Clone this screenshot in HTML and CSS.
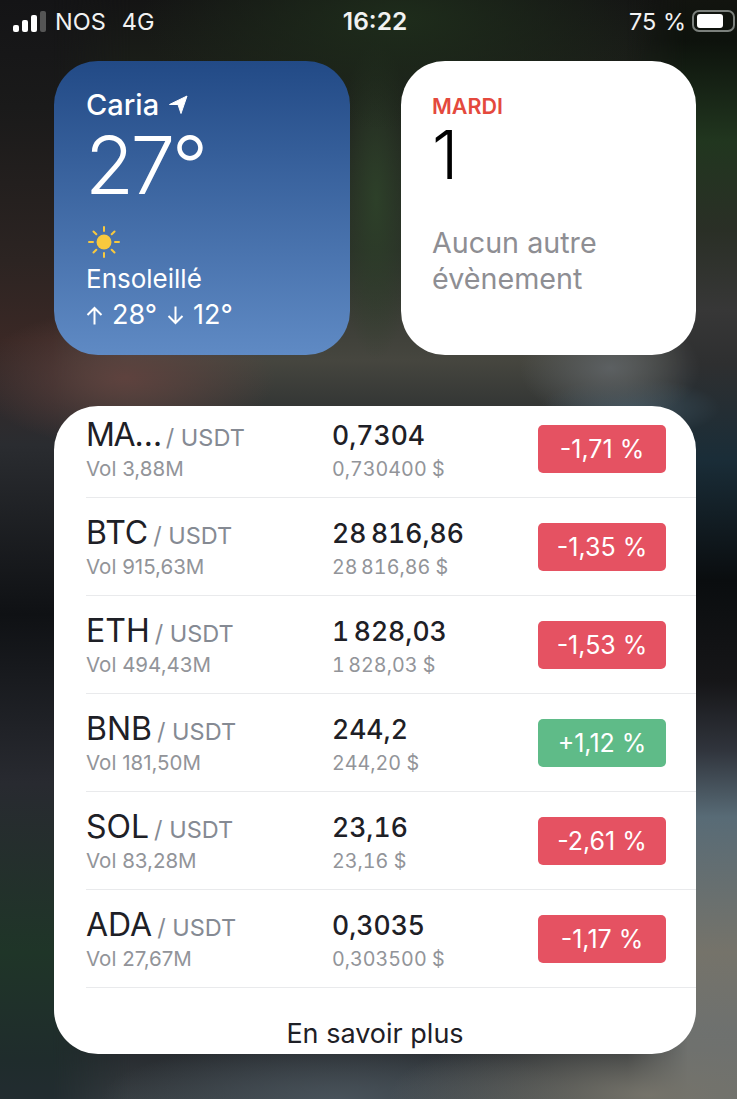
FILE: index.html
```html
<!DOCTYPE html>
<html lang="fr">
<head>
<meta charset="utf-8">
<title>Widgets</title>
<link rel="stylesheet" href="styles.css">
</head>
<body>
<div class="statusbar">
  <div class="status-left">
    <div class="signal"><i class="b1"></i><i class="b2"></i><i class="b3"></i><i class="b4"></i></div>
    <span class="carrier">NOS</span>
    <span class="net">4G</span>
  </div>
  <div class="clock">16:22</div>
  <div class="status-right">
    <span>75 %</span>
    <div class="battery"><div class="level"></div></div>
  </div>
</div>

<div class="widgets">
  <div class="widget weather">
    <div class="city">Caria
      <svg width="20" height="20" viewBox="0 0 20 20"><path d="M19 1 1.500 9.500h8.500l3 9z" fill="#fff" stroke="#fff" stroke-width="1" stroke-linejoin="round"/></svg>
    </div>
    <div class="temp">27°</div>
    <svg class="sun" width="34" height="34" viewBox="0 0 34 34">
      <circle cx="17" cy="17" r="7.500" fill="#f8c93e"/>
      <g stroke="#f8c93e" stroke-width="2" stroke-linecap="round">
        <path d="M17 2v4M17 28v4M2 17h4M28 17h4M6.500 6.500l2.800 2.800M24.700 24.700l2.800 2.800M6.500 27.500l2.800-2.800M24.700 9.300l2.800-2.800"/>
      </g>
    </svg>
    <div class="sky">Ensoleillé</div>
    <div class="range">
      <svg width="17" height="19" viewBox="0 0 17 19"><path d="M8.500 18.500V2M1.500 9l7-7 7 7" fill="none" stroke="#fff" stroke-width="2"/></svg>
      <span>28°</span>
      <svg class="low" width="17" height="19" viewBox="0 0 17 19"><path d="M8.500 .5V17M1.500 10l7 7 7-7" fill="none" stroke="#fff" stroke-width="2"/></svg>
      <span>12°</span>
    </div>
  </div>

  <div class="widget calendar">
    <div class="day">MARDI</div>
    <div class="date">1</div>
    <div class="noevent">Aucun autre<br>évènement</div>
  </div>
</div>

<div class="panel">
  <div class="list">
    <div class="row">
      <div class="pair"><div><span class="sym clip">MA…</span><span class="quote">/ USDT</span></div><div class="sub">Vol 3,88M</div></div>
      <div class="price"><div class="last">0,7304</div><div class="sub">0,730400 $</div></div>
      <div class="badge down">-1,71 %</div>
    </div>
    <div class="row">
      <div class="pair"><div><span class="sym">BTC</span><span class="quote">/ USDT</span></div><div class="sub">Vol 915,63M</div></div>
      <div class="price"><div class="last">28&#8239;816,86</div><div class="sub">28&#8239;816,86 $</div></div>
      <div class="badge down">-1,35 %</div>
    </div>
    <div class="row">
      <div class="pair"><div><span class="sym">ETH</span><span class="quote">/ USDT</span></div><div class="sub">Vol 494,43M</div></div>
      <div class="price"><div class="last">1&#8239;828,03</div><div class="sub">1&#8239;828,03 $</div></div>
      <div class="badge down">-1,53 %</div>
    </div>
    <div class="row">
      <div class="pair"><div><span class="sym">BNB</span><span class="quote">/ USDT</span></div><div class="sub">Vol 181,50M</div></div>
      <div class="price"><div class="last">244,2</div><div class="sub">244,20 $</div></div>
      <div class="badge up">+1,12 %</div>
    </div>
    <div class="row">
      <div class="pair"><div><span class="sym">SOL</span><span class="quote">/ USDT</span></div><div class="sub">Vol 83,28M</div></div>
      <div class="price"><div class="last">23,16</div><div class="sub">23,16 $</div></div>
      <div class="badge down">-2,61 %</div>
    </div>
    <div class="row">
      <div class="pair"><div><span class="sym">ADA</span><span class="quote">/ USDT</span></div><div class="sub">Vol 27,67M</div></div>
      <div class="price"><div class="last">0,3035</div><div class="sub">0,303500 $</div></div>
      <div class="badge down">-1,17 %</div>
    </div>
  </div>
  <div class="more">En savoir plus</div>
</div>
</body>
</html>
```

FILE: styles.css
```css
html, body { margin: 0; height: 100%; }

html {
    background: linear-gradient(180deg, #141414 0%, #1a1d18 60px, #2a2f28 250px, #46463f 360px, #323534 410px, #111316 600px, #262a2e 1050px, #363c40 1099px);
}

body {
    position: relative;
    width: 737px;
    height: 1099px;
    overflow: hidden;
    color: #fff;
    font-family: "Inter", "Liberation Sans", sans-serif;
    background-image:
        radial-gradient(ellipse 150px 70px at 125px 378px, #5e423e 0%, rgba(94,66,62,0) 100%),
        radial-gradient(ellipse 90px 55px at 610px 368px, #5c6062 0%, rgba(92,96,98,0) 100%),
        radial-gradient(ellipse 90px 30px at 630px 408px, #3c505c 0%, rgba(60,80,92,0) 100%),
        radial-gradient(ellipse 260px 70px at 650px 1095px, #75736a 0%, rgba(117,115,106,0) 100%),
        radial-gradient(ellipse 240px 60px at 340px 1099px, #48525a 0%, rgba(72,82,90,0) 100%),
        radial-gradient(ellipse 260px 110px at 400px 20px, #1e2c1b 0%, rgba(30,44,27,0) 100%),
        radial-gradient(ellipse 40px 160px at 376px 200px, #2d4029 0%, rgba(45,64,41,0) 100%);
}

/* fond : bandes verticales des deux bords */
body::before, body::after {
    content: "";
    position: absolute;
    top: 0;
    bottom: 0;
    z-index: -1;
}
body::before {
    left: 0;
    width: 130px;
    background: linear-gradient(180deg, #141416 0%, #1a1a1a 107px, #2c2422 260px, #3a2825 340px, #2a2c30 445px, #0f1114 614px, #282a30 783px, #1f3528 952px, #1f2c2c 1060px, #222c30 1099px);
    -webkit-mask-image: linear-gradient(90deg, #000 40%, transparent);
    mask-image: linear-gradient(90deg, #000 40%, transparent);
}
body::after {
    right: 0;
    width: 110px;
    background: linear-gradient(180deg, #12140f 0%, #0d120c 40px, #21361f 141px, #2a2f26 230px, #373737 310px, #2e2f30 364px, #1a2d38 459px, #0a0d0f 580px, #161618 682px, #30343c 750px, #586b76 817px, #75736a 952px, #6c7070 1053px, #6a7072 1099px);
    -webkit-mask-image: linear-gradient(270deg, #000 45%, transparent);
    mask-image: linear-gradient(270deg, #000 45%, transparent);
}

/* barre de statut */
.statusbar {
    display: flex;
    align-items: center;
    justify-content: space-between;
    height: 42px;
    padding: 0 2px 0 13px;
    font-size: 23.500px;
    color: #f2f2f2;
}
.status-left, .status-right { display: flex; align-items: center; flex: 1; }
.status-right { justify-content: flex-end; }
.signal { display: flex; align-items: flex-end; gap: 3px; height: 21px; margin-right: 9px; }
.signal i { display: block; width: 6px; background: #fff; border-radius: 2px; }
.signal .b1 { height: 7px; }
.signal .b2 { height: 12px; }
.signal .b3 { height: 17px; }
.signal .b4 { height: 21px; background: #555; }
.net { margin-left: 16px; }
.clock { font-weight: 600; font-size: 24.500px; margin-left: 2px; }
.battery {
    width: 43px;
    height: 22px;
    margin-left: 6px;
    padding: 2px 3px;
    box-sizing: border-box;
    border: 2px solid #7b807c;
    border-radius: 7px;
}
.level { width: 26px; height: 100%; background: #fff; border-radius: 3px; }

/* widgets */
.widgets {
    display: flex;
    justify-content: space-between;
    width: 642px;
    margin: 19px 0 0 54px;
}
.widget {
    box-sizing: border-box;
    width: 296px;
    height: 294px;
    border-radius: 44px;
    padding: 26px 32px;
}
.weather { background: linear-gradient(180deg, #224a86 0%, #5f8ac4 100%); }
.city { display: flex; align-items: center; gap: 9px; font-size: 29px; font-weight: 500; line-height: 36px; }
.temp { font-size: 80px; font-weight: 300; line-height: 88px; letter-spacing: -3.500px; margin: -2px 0 0 -1px; }
.sun { display: block; margin: 16px 0 0 1px; }
.sky { font-size: 26px; line-height: 30px; margin-top: 5px; }
.range { display: flex; align-items: center; gap: 9px; font-size: 27px; line-height: 30px; margin-top: 6px; }
.range .low { margin-left: 1px; }

.calendar { width: 295px; background: #fff; color: #000; padding-left: 31px; }
.day { color: #e4493d; font-size: 21.500px; font-weight: 600; line-height: 38px; }
.date { font-size: 67px; font-weight: 300; line-height: 62px; margin-top: -1px; }
.noevent { color: #8e8e93; font-size: 28.700px; line-height: 36px; margin-top: 39px; }

/* liste des paires */
.panel {
    width: 642px;
    height: 648px;
    margin: 51px 0 0 54px;
    background: #fff;
    border-radius: 44px;
    overflow: hidden;
    color: #1e2026;
}
.list { margin: -6px 0 0 32px; }
.row {
    display: flex;
    align-items: center;
    height: 98px;
    box-sizing: border-box;
    border-bottom: 1px solid #e9eaec;
}
.pair { width: 246px; }
.price { width: 206px; font-feature-settings: "tnum"; }
.sym { font-size: 32px; line-height: 40px; }
.clip { letter-spacing: -1.300px; }
.quote { color: #858a93; font-size: 23.500px; margin-left: 5px; }
.last { font-size: 26.500px; font-weight: 500; line-height: 40px; }
.sub { color: #929499; font-size: 20.500px; line-height: 26px; margin-top: 1px; }
.price .sub { font-size: 19.700px; }
.badge {
    width: 128px;
    height: 48px;
    border-radius: 5px;
    color: #fff;
    font-size: 25px;
    line-height: 48px;
    text-align: center;
}
.down { background: #e55262; }
.up { background: #5fbb88; }
.more { font-size: 27px; line-height: 34px; text-align: center; margin-top: 29px; }
```
